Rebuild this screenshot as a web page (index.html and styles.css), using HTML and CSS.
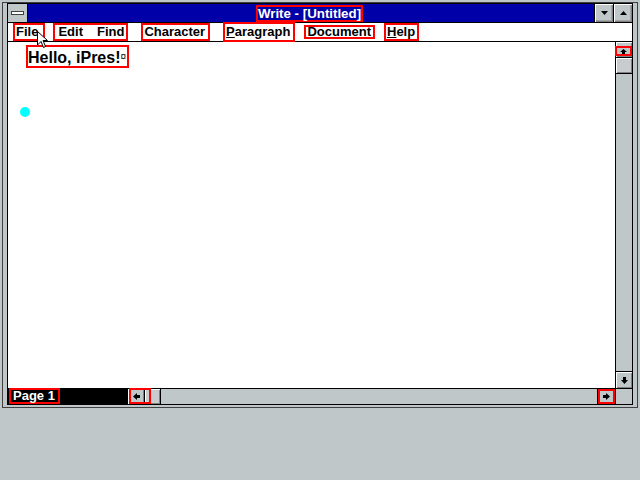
FILE: index.html
```html
<!DOCTYPE html>
<html>
<head>
<meta charset="utf-8">
<title>Write - [Untitled]</title>
<link rel="stylesheet" href="styles.css">
</head>
<body>
<div class="window">
  <div class="frame">
    <div class="inner">
      <div class="titlebar">
        <div class="sysbox"><span class="sysbar"></span></div>
        <div class="title"><span class="hl title-hl">Write - [Untitled]</span></div>
        <div class="tbtn"><svg width="7" height="4" viewBox="0 0 7 4"><polygon points="0,0 7,0 3.5,4" fill="#000"/></svg></div>
        <div class="tbtn"><svg width="7" height="4" viewBox="0 0 7 4"><polygon points="0,4 7,4 3.5,0" fill="#000"/></svg></div>
      </div>
      <div class="menubar">
        <span class="hl m-file">File</span>
        <span class="hl m-editfind"><span>Edit</span><span class="m-find">Find</span></span>
        <span class="hl m-char">Character</span>
        <span class="hl m-para"><u>P</u>aragraph</span>
        <span class="hl m-doc"><u>D</u>ocument</span>
        <span class="hl m-help"><u>H</u>elp</span>
      </div>
      <div class="body">
        <div class="client">
          <span class="hl doc-text">Hello, iPres!<span class="endmark">¤</span></span>
          <span class="dot"></span>
        </div>
        <div class="vscroll">
          <div class="sbtn vup"><span class="hl upbox"><svg width="7" height="5" viewBox="0 0 7 5"><path d="M3.5 0 L7 3 H5 V5 H2 V3 H0 Z" fill="#000"/></svg></span></div>
          <div class="sthumb vthumb"></div>
          <div class="strack"></div>
          <div class="sbtn vdown"><svg width="7" height="7" viewBox="0 0 7 7"><path d="M2 0 H5 V3 H7 L3.5 7 L0 3 H2 Z" fill="#000"/></svg></div>
        </div>
      </div>
      <div class="bottom">
        <div class="status"><span class="hl page-hl">Page 1</span></div>
        <div class="hscroll">
          <div class="leftgroup">
            <div class="sbtn hleft"><svg width="7" height="7" viewBox="0 0 7 7"><path d="M0 3.5 L4 0 V2 H7 V5 H4 V7 Z" fill="#000"/></svg></div>
            <div class="sthumb hthumb"></div>
          </div>
          <div class="strack"></div>
          <div class="sbtn hright hl-btn"><svg width="7" height="7" viewBox="0 0 7 7"><path d="M7 3.5 L3 0 V2 H0 V5 H3 V7 Z" fill="#000"/></svg></div>
        </div>
        <div class="corner"></div>
      </div>
    </div>
  </div>
  <svg class="cursor" width="12" height="18" viewBox="0 0 12 18"><path d="M0.5 0.5 L0.5 14 L4 10.5 L6.5 16.5 L8.5 15.5 L6 9.5 L10.5 9.5 Z" fill="#fff" stroke="#000" stroke-width="1"/></svg>
</div>
</body>
</html>
```

FILE: styles.css
```css
html, body {
  margin: 0;
  padding: 0;
}
body {
  width: 640px;
  height: 480px;
  overflow: hidden;
  background: #c0c7c8;
  font-family: "Liberation Sans", Arial, sans-serif;
  font-size: 13px;
  font-weight: bold;
}
.window {
  position: relative;
  box-sizing: border-box;
  width: 640px;
  height: 408px;
  padding: 2px 2px 0;
  background: #c0c7c8;
}
.frame {
  box-sizing: border-box;
  height: 406px;
  border: 1px solid #404040;
  padding: 0 4px 2px;
}
.inner {
  box-sizing: border-box;
  height: 402px;
  border: 1px solid #000;
  display: flex;
  flex-direction: column;
  background: #fff;
}
.hl {
  border: 2px solid #ff0000;
  box-sizing: border-box;
}
/* title bar */
.titlebar {
  display: flex;
  height: 18px;
  border-bottom: 1px solid #000;
}
.sysbox {
  width: 19px;
  border-right: 1px solid #000;
  background: #c0c7c8;
  display: flex;
  align-items: center;
  justify-content: center;
}
.sysbar {
  width: 11px;
  height: 2px;
  background: #fff;
  border: 1px solid #404040;
}
.title {
  flex: 1;
  background: #0000a8;
  display: flex;
  align-items: center;
  justify-content: center;
  color: #fff;
}
.title-hl {
  height: 17px;
  line-height: 13px;
  padding: 0;
  margin-right: 3px;
  font-size: 13.3px;
}
.tbtn {
  width: 18px;
  border-left: 1px solid #000;
  background: #c0c7c8;
  box-shadow: inset 1px 1px #fff, inset -1px -1px #808080, inset -2px -2px #a0a4a8;
  display: flex;
  align-items: center;
  justify-content: center;
}
/* menu bar */
.menubar {
  display: flex;
  align-items: center;
  height: 18px;
  border-bottom: 1px solid #000;
  padding-left: 5px;
  color: #000;
}
.menubar .hl {
  height: 18px;
  line-height: 14px;
  white-space: nowrap;
}
.m-file { padding: 0 5px 0 1px; }
.m-editfind { margin-left: 8px; padding: 0 2px 0 3px; display: flex; }
.m-find { margin-left: 14px; }
.m-char { margin-left: 13px; padding: 0 3px 0 1px; }
.menubar .m-para { margin-left: 13px; padding: 1px 3px 1px 1px; height: 20px; }
.menubar .m-doc { margin-left: 9px; padding: 0 2px 0 1px; height: 14px; line-height: 10px; overflow: hidden; }
.m-help { margin-left: 9px; padding: 0 2px 0 1px; }
/* body */
.body {
  display: flex;
  height: 346px;
}
.client {
  position: relative;
  flex: 1;
  background: #fff;
}
.doc-text {
  display: inline-block;
  margin: 3px 0 0 18px;
  height: 23px;
  line-height: 19px;
  font-size: 16px;
  padding: 0 1px 0 0;
  color: #000;
}
.endmark {
  font-size: 10px;
  font-weight: normal;
  vertical-align: 3px;
}
.dot {
  position: absolute;
  left: 12px;
  top: 65px;
  width: 10px;
  height: 10px;
  border-radius: 50%;
  background: #00ffff;
}
.vscroll {
  width: 16px;
  border-left: 1px solid #000;
  display: flex;
  flex-direction: column;
  background: #c0c7c8;
}
.sbtn {
  background: #c0c7c8;
  box-shadow: inset 1px 1px #fff, inset -1px -1px #808080;
  display: flex;
  align-items: center;
  justify-content: center;
}
.vup {
  height: 15px;
  border-bottom: 1px solid #000;
  align-items: flex-end;
}
.upbox {
  width: 17px;
  margin-left: -1px;
  height: 10px;
  display: flex;
  align-items: center;
  justify-content: center;
  margin-bottom: 1px;
}
.sthumb {
  background: #c8cccf;
  box-shadow: inset 1px 1px #fff, inset -1px -1px #808080;
}
.vthumb {
  height: 15px;
  border-bottom: 1px solid #000;
}
.strack {
  flex: 1;
  background: #c0c7c8;
}
.vdown {
  height: 16px;
  border-top: 1px solid #000;
}
/* bottom */
.bottom {
  display: flex;
  height: 15px;
  border-top: 1px solid #000;
}
.status {
  width: 120px;
  background: #000;
  color: #fff;
  display: flex;
}
.page-hl {
  margin: -1px 0 0 1px;
  height: 16px;
  line-height: 12px;
  padding: 0 3px 0 2px;
}
.hscroll {
  flex: 1;
  display: flex;
  background: #c0c7c8;
}
.leftgroup {
  position: relative;
  display: flex;
}
.leftgroup::after {
  content: "";
  position: absolute;
  left: 1px;
  top: -1px;
  width: 22px;
  height: 16px;
  box-sizing: border-box;
  border: 2px solid #ff0000;
}
.hleft {
  width: 16px;
  border-right: 1px solid #000;
}
.hthumb {
  width: 15px;
  border-right: 1px solid #000;
}
.hright {
  width: 17px;
  border-left: 1px solid #000;
}
.hl-btn {
  box-shadow: inset 0 0 0 2px #ff0000;
}
.corner {
  width: 16px;
  border-left: 1px solid #000;
  background: #c0c7c8;
}
.cursor {
  position: absolute;
  left: 37px;
  top: 31px;
}
```
